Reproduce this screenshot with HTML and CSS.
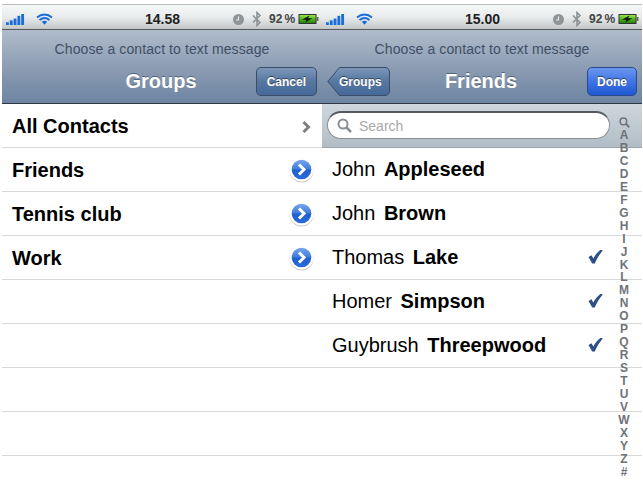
FILE: index.html
```html
<!DOCTYPE html>
<html lang="en">

<head>
    <meta charset="UTF-8">
    <title>Choose a contact</title>
    <link rel="stylesheet" href="styles.css">
</head>

<body>
    <svg class="defs" width="0" height="0">
        <defs>
            <linearGradient id="chip" x1="0" y1="0" x2="0" y2="1">
                <stop offset="0" stop-color="#7aa6ea"/>
                <stop offset="0.48" stop-color="#3f7ddc"/>
                <stop offset="0.52" stop-color="#1f5fd0"/>
                <stop offset="1" stop-color="#2a6ada"/>
            </linearGradient>
            <linearGradient id="charge" x1="0" y1="0" x2="0" y2="1">
                <stop offset="0" stop-color="#a4ec50"/>
                <stop offset="0.5" stop-color="#4fb81c"/>
                <stop offset="1" stop-color="#1f7a0c"/>
            </linearGradient>
            <linearGradient id="backfill" x1="0" y1="0" x2="0" y2="1">
                <stop offset="0" stop-color="#7d97ba"/>
                <stop offset="0.5" stop-color="#56779f"/>
                <stop offset="1" stop-color="#45699a"/>
            </linearGradient>
            <symbol id="signal" viewBox="0 0 20 12" preserveAspectRatio="none">
                <rect x="0" y="9" width="3" height="3" fill="#1a6ddc"/>
                <rect x="4" y="7" width="3" height="5" fill="#1a6ddc"/>
                <rect x="8" y="5" width="3" height="7" fill="#1a6ddc"/>
                <rect x="12" y="2" width="3" height="10" fill="#1a6ddc"/>
                <rect x="16" y="0" width="3" height="12" fill="#1a6ddc"/>
            </symbol>
            <symbol id="wifi" viewBox="0 0 17 12">
                <path d="M1 4.500C5.500 .5 11.500 .5 16 4.500M3.500 7C6.500 4.500 10.500 4.500 13.500 7" fill="none" stroke="#1a6ddc" stroke-width="2"/>
                <path d="M5.800 8.800C7.500 7.400 9.500 7.400 11.200 8.800L8.500 11.800Z" fill="#1a6ddc"/>
            </symbol>
            <symbol id="clock" viewBox="0 0 11 11">
                <circle cx="5.500" cy="5.500" r="5.500" fill="#8f9496"/>
                <path d="M5.500 2.500V6H3" fill="none" stroke="#e8ebec" stroke-width="1.200"/>
            </symbol>
            <symbol id="bluetooth" viewBox="0 0 10 16">
                <path d="M1 4.500L8 11.500L5 14.500V1.500L8 4.500L1 11.500" fill="none" stroke="#8b8f91" stroke-width="1.500"/>
            </symbol>
            <symbol id="battery" viewBox="0 0 20 10">
                <rect x=".5" y=".5" width="17" height="9" fill="url(#charge)" stroke="#333"/>
                <rect x="18" y="3" width="2" height="4" fill="#666"/>
                <path d="M11 1.500L3.500 5.800H8L6.500 8.500L14 4.200H9.500Z" fill="#111"/>
            </symbol>
            <symbol id="chevron" viewBox="0 0 27 27">
                <circle cx="13.500" cy="14.500" r="12" fill="#9a9a9a" opacity=".55"/>
                <circle cx="13.500" cy="13.500" r="12" fill="#fff"/>
                <circle cx="13.500" cy="13.500" r="9.800" fill="url(#chip)"/>
                <path d="M11 8.500L16 13.500L11 18.500" fill="none" stroke="#fff" stroke-width="3"/>
            </symbol>
            <symbol id="tick" viewBox="0 0 15 15">
                <path d="M.5 8L3.500 6.300L5.300 9.500C7.300 5.800 9.800 2.800 12.800 .8L14.800 1.500C11.500 5.200 8.800 9.500 6.800 14.500H4.200Z" fill="#2f4f86"/>
            </symbol>
            <symbol id="lens" viewBox="0 0 15 15">
                <circle cx="6" cy="6" r="4.500" fill="none" stroke="currentColor" stroke-width="2"/>
                <path d="M9.500 9.500L14 14" stroke="currentColor" stroke-width="2.500"/>
            </symbol>
        </defs>
    </svg>

    <div class="phones">
        <!-- left screen -->
        <section class="phone">
            <div class="status">
                <div class="status-left">
                    <svg class="ic-signal"><use href="#signal"/></svg>
                    <svg class="ic-wifi"><use href="#wifi"/></svg>
                </div>
                <span class="time">14.58</span>
                <div class="status-right">
                    <svg class="ic-clock"><use href="#clock"/></svg>
                    <svg class="ic-bt"><use href="#bluetooth"/></svg>
                    <span class="percent">92 %</span>
                    <svg class="ic-battery"><use href="#battery"/></svg>
                </div>
            </div>
            <header class="nav">
                <div class="prompt">Choose a contact to text message</div>
                <div class="nav-bar">
                    <span class="nav-side"></span>
                    <h1 class="nav-title">Groups</h1>
                    <span class="nav-side nav-right"><button class="btn">Cancel</button></span>
                </div>
            </header>
            <ul class="list">
                <li class="row group">All Contacts<svg class="arrow" viewBox="0 0 9 12"><path d="M1.500 1L6.500 6L1.500 11" fill="none" stroke="#808080" stroke-width="3"/></svg></li>
                <li class="row group">Friends<svg class="more"><use href="#chevron"/></svg></li>
                <li class="row group">Tennis club<svg class="more"><use href="#chevron"/></svg></li>
                <li class="row group">Work<svg class="more"><use href="#chevron"/></svg></li>
                <li class="row"></li>
                <li class="row"></li>
                <li class="row"></li>
                <li class="row"></li>
            </ul>
        </section>

        <!-- right screen -->
        <section class="phone">
            <div class="status">
                <div class="status-left">
                    <svg class="ic-signal"><use href="#signal"/></svg>
                    <svg class="ic-wifi"><use href="#wifi"/></svg>
                </div>
                <span class="time">15.00</span>
                <div class="status-right">
                    <svg class="ic-clock"><use href="#clock"/></svg>
                    <svg class="ic-bt"><use href="#bluetooth"/></svg>
                    <span class="percent">92 %</span>
                    <svg class="ic-battery"><use href="#battery"/></svg>
                </div>
            </div>
            <header class="nav">
                <div class="prompt">Choose a contact to text message</div>
                <div class="nav-bar">
                    <span class="nav-side">
                        <button class="btn-back">
                            <svg class="back-shape" viewBox="0 0 63 29"><path d="M12.500 .5H58A4.500 4.500 0 0 1 62.500 5V24A4.500 4.500 0 0 1 58 28.500H12.500L.8 14.500Z" fill="url(#backfill)" stroke="#3a4c68"/></svg>
                            <span class="back-label">Groups</span>
                        </button>
                    </span>
                    <h1 class="nav-title">Friends</h1>
                    <span class="nav-side nav-right"><button class="btn btn-done">Done</button></span>
                </div>
            </header>
            <ul class="list">
                <li class="search-row">
                    <div class="search"><svg class="ic-lens"><use href="#lens"/></svg>Search</div>
                </li>
                <li class="row person"><span>John</span><b>Appleseed</b></li>
                <li class="row person"><span>John</span><b>Brown</b></li>
                <li class="row person"><span>Thomas</span><b>Lake</b><svg class="tick"><use href="#tick"/></svg></li>
                <li class="row person"><span>Homer</span><b>Simpson</b><svg class="tick"><use href="#tick"/></svg></li>
                <li class="row person"><span>Guybrush</span><b>Threepwood</b><svg class="tick"><use href="#tick"/></svg></li>
                <li class="row"></li>
                <li class="row"></li>
            </ul>
            <div class="index">
                <svg class="ic-index"><use href="#lens"/></svg>
                <span>A</span><span>B</span><span>C</span><span>D</span><span>E</span><span>F</span><span>G</span><span>H</span><span>I</span><span>J</span><span>K</span><span>L</span><span>M</span><span>N</span><span>O</span><span>P</span><span>Q</span><span>R</span><span>S</span><span>T</span><span>U</span><span>V</span><span>W</span><span>X</span><span>Y</span><span>Z</span><span>#</span>
            </div>
        </section>
    </div>
</body>

</html>
```

FILE: styles.css
```css
/* page */
body {
    margin: 0;
    background: #fff;
    font-family: 'Liberation Sans', Arial, sans-serif;
    overflow: hidden;
}

.defs {
    position: absolute;
}

.phones {
    display: flex;
    height: 488px;
    padding: 4px 1px 0 2px;
    box-sizing: border-box;
}

.phone {
    position: relative;
    width: 320px;
    overflow: hidden;
}

/* status bar */
.status {
    height: 26px;
    box-sizing: border-box;
    padding: 4px 3px 0 4px;
    display: grid;
    grid-template-columns: 1fr auto 1fr;
    align-items: center;
    border-top: 1px solid #bdbdbd;
    border-bottom: 1px solid #55585c;
    background: linear-gradient(to bottom, #f6f8f8, #e9ecec 50%, #c3c7c8);
    color: #222;
}

.status-left,
.status-right {
    display: flex;
    align-items: center;
}

.status-right {
    justify-content: flex-end;
}

.ic-signal {
    width: 19px;
    height: 11px;
}

.ic-wifi {
    width: 17px;
    height: 12px;
    margin-left: 11px;
}

.time {
    font-size: 14px;
    font-weight: bold;
}

.ic-clock {
    width: 11px;
    height: 11px;
}

.ic-bt {
    width: 10px;
    height: 16px;
    margin-left: 8px;
}

.percent {
    width: 26px;
    margin-left: 7px;
    font-size: 12px;
    font-weight: bold;
    color: #444;
    word-spacing: -1.300px;
    white-space: nowrap;
}

.ic-battery {
    width: 21px;
    height: 10px;
    margin-left: 3px;
}

/* nav */
.nav {
    height: 74px;
    box-sizing: border-box;
    border-bottom: 1px solid #2d3642;
    background: linear-gradient(to bottom, #b0bccc, #8d9db3 50%, #6d84a2);
}

.prompt {
    padding-top: 10px;
    height: 37px;
    box-sizing: border-box;
    line-height: 18px;
    text-align: center;
    font-size: 14px;
    color: #3f4f66;
    letter-spacing: .1px;
}

.nav-bar {
    display: flex;
    align-items: center;
    height: 29px;
    padding: 0 5px;
}

.nav-side {
    flex: 1;
    display: flex;
}

.nav-right {
    justify-content: flex-end;
}

.nav-title {
    margin: 0 2px 0 0;
    font-size: 20px;
    font-weight: bold;
    color: #fff;
    text-shadow: 0 -1px 0 #55657c;
}

/* buttons */
.btn {
    height: 29px;
    padding: 0 10px;
    border: 1px solid #3a4c68;
    border-radius: 5px;
    font-family: inherit;
    font-size: 12px;
    font-weight: bold;
    color: #fff;
    text-shadow: 0 -1px 0 #33445c;
    background: linear-gradient(to bottom, #7d97ba, #56779f 50%, #45699a);
}

.btn-back {
    position: relative;
    width: 63px;
    height: 29px;
    padding: 0 9px 0 12px;
    border: 0;
    background: none;
    font-family: inherit;
    font-size: 12px;
    font-weight: bold;
    color: #fff;
    text-shadow: 0 -1px 0 #33445c;
}

/* the arrow shaped outline sits behind the label */
.back-shape {
    position: absolute;
    left: 0;
    top: 0;
    width: 63px;
    height: 29px;
}

.back-label {
    position: relative;
}

.btn-done {
    padding: 0 9px;
    border-color: #2a4a8c;
    background: linear-gradient(to bottom, #6c97ee, #3f74e4 50%, #1f58d2);
}

/* lists */
.list {
    margin: 0;
    padding: 0;
    list-style: none;
}

.row {
    height: 44px;
    box-sizing: border-box;
    padding: 2px 10px 0;
    display: flex;
    align-items: center;
    border-bottom: 1px solid #d9d9d9;
    background: #fff;
}

.group {
    justify-content: space-between;
    font-size: 20px;
    font-weight: bold;
    color: #000;
}

.arrow {
    width: 9px;
    height: 12px;
    margin-right: 1px;
}

.more {
    width: 27px;
    height: 27px;
    margin: 0 -3px 2px 0;
    flex: none;
}

.person {
    padding-top: 0;
    font-size: 20px;
    color: #000;
    position: relative;
}

.person b {
    margin-left: 8.500px;
}

.tick {
    position: absolute;
    left: 266px;
    top: 13px;
    width: 15px;
    height: 15px;
}

/* search */
.search-row {
    height: 44px;
    box-sizing: border-box;
    padding: 7px 32px 0 5px;
    background: linear-gradient(to bottom, #cfd7dd, #b1bdc6);
    border-bottom: 1px solid #9aa5ae;
}

.search {
    height: 28px;
    box-sizing: border-box;
    padding-left: 9px;
    display: flex;
    align-items: center;
    gap: 7px;
    border: 1px solid #8c8f92;
    border-top: 2px solid #55595d;
    border-radius: 14px;
    background: #fff;
    font-size: 14px;
    color: #a8a8a8;
}

.ic-lens {
    width: 15px;
    height: 15px;
    color: #8b9094;
}

/* section index, lies over the rows */
.index {
    position: absolute;
    top: 113px;
    right: 9px;
    width: 18px;
    display: flex;
    flex-direction: column;
    align-items: center;
    font-size: 12px;
    font-weight: bold;
    color: #6f7378;
}

.index span {
    height: 12.960px;
    line-height: 13px;
}

.ic-index {
    width: 11px;
    height: 11px;
    margin-bottom: 1px;
    color: #6f7378;
}
```
